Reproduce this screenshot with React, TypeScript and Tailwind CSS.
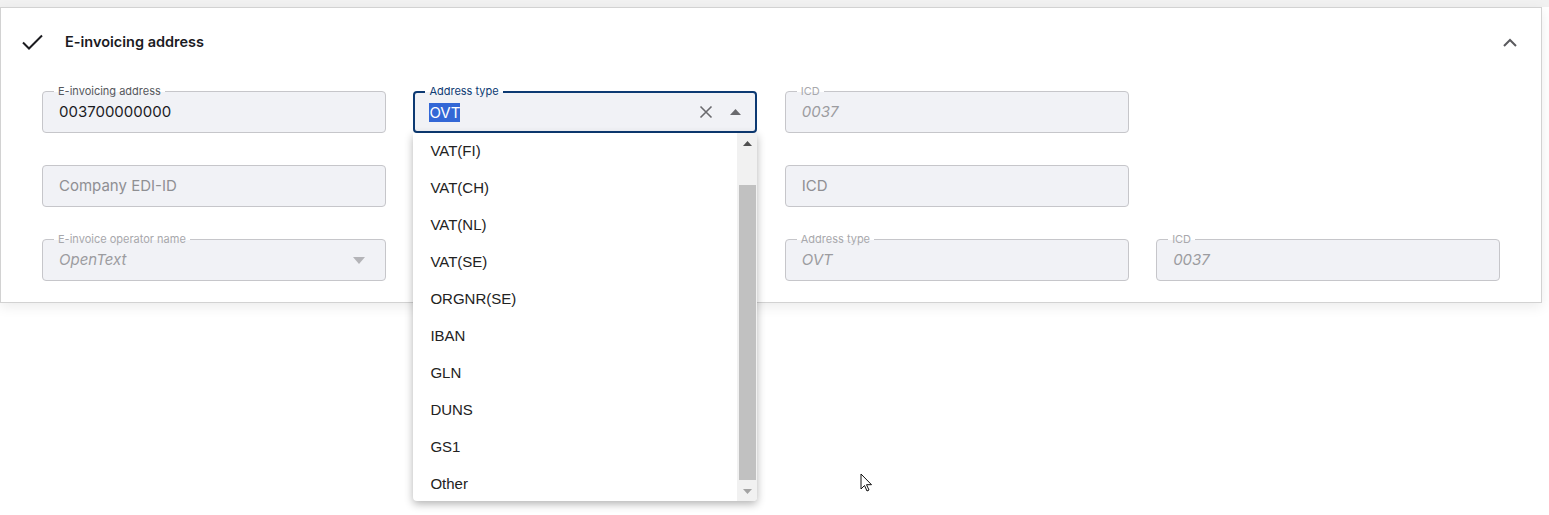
import React from 'react';

const sans = { fontFamily: 'Inter, "Noto Sans", sans-serif' };
const arial = { fontFamily: '"Liberation Sans", Arial, sans-serif' };

type FieldProps = {
  label?: string;
  value?: string;
  placeholder?: string;
  disabled?: boolean;
  arrow?: boolean;
};

function Field({ label, value, placeholder, disabled, arrow }: FieldProps) {
  return (
    <div className="relative h-[42px] rounded-[4px] border border-[#c6c6ca] bg-[#f1f2f6] flex items-center pl-4 pr-5">
      {label && (
        <span
          className={`absolute left-[11px] -top-[8px] px-[4px] text-[11px] leading-[14px] bg-[linear-gradient(to_bottom,#ffffff_55%,#f1f2f6_55%)] ${
            disabled ? 'text-[#a8a8ac]' : 'text-[#55575c]'
          }`}
        >
          {label}
        </span>
      )}
      {value ? (
        <span className={`text-[15px] ${disabled ? 'italic text-[#9c9ca0]' : 'text-[#1b1b1f]'}`}>{value}</span>
      ) : (
        placeholder && <span className="text-[15px] text-[#8f8f93]">{placeholder}</span>
      )}
      {arrow && (
        <svg className="ml-auto" width="12" height="7" viewBox="0 0 12 7">
          <path d="M0 0h12L6 7z" fill="#b4b4b8" />
        </svg>
      )}
    </div>
  );
}

const options = ['VAT(FI)', 'VAT(CH)', 'VAT(NL)', 'VAT(SE)', 'ORGNR(SE)', 'IBAN', 'GLN', 'DUNS', 'GS1', 'Other'];

function AddressTypeSelect() {
  return (
    <div className="relative h-[42px] rounded-[4px] border-2 border-[#0d3a73] bg-[#f1f2f6] flex items-center pl-[14px] pr-[14px]">
      <span className="absolute left-[10px] -top-[9px] px-[4px] text-[11px] leading-[14px] text-[#0d3a73] bg-[linear-gradient(to_bottom,#ffffff_55%,#f1f2f6_55%)]">
        Address type
      </span>
      <span className="text-[15px] leading-[19px] bg-[#3367d6] text-white">OVT</span>
      <svg className="ml-auto mr-[17px]" width="14" height="14" viewBox="0 0 14 14">
        <path d="M1.5 1.5l11 11M12.5 1.5l-11 11" stroke="#6a6a6e" strokeWidth="1.6" />
      </svg>
      <svg width="11" height="6" viewBox="0 0 11 6">
        <path d="M0 6h11L5.5 0z" fill="#6a6a6e" />
      </svg>

      {/* open option list */}
      <div
        className="absolute left-[-2px] top-[40px] w-[344px] h-[368px] bg-white rounded-b-[4px] shadow-[0_3px_8px_rgba(0,0,0,0.3)] flex z-10 overflow-hidden"
        style={arial}
      >
        <ul className="flex-1">
          {options.map((o) => (
            <li key={o} className="h-[37px] flex items-center pl-[17px] text-[15px] text-[#222]">
              {o}
            </li>
          ))}
        </ul>
        <div className="w-[20px] bg-[#f1f1f1] flex flex-col items-center">
          <div className="h-[20px] flex items-center justify-center">
            <svg width="9" height="5" viewBox="0 0 9 5">
              <path d="M0 5h9L4.5 0z" fill="#505050" />
            </svg>
          </div>
          <div className="w-[17px] mt-[32px] h-[295px] bg-[#c1c1c1]" />
          <div className="mt-auto h-[20px] flex items-center justify-center">
            <svg width="9" height="5" viewBox="0 0 9 5">
              <path d="M0 0h9L4.5 5z" fill="#a3a3a3" />
            </svg>
          </div>
        </div>
      </div>
    </div>
  );
}

export default function App() {
  return (
    <div className="relative min-h-screen bg-white" style={sans}>
      <div className="h-[7px] bg-[#f1f1f1]" />
      <section className="w-[1542px] border border-[#d2d2d2] bg-white shadow-[0_4px_12px_rgba(0,0,0,0.08)]">
        <header className="h-[68px] flex items-center pl-[21px] pr-[24px]">
          <svg width="21" height="16" viewBox="0 0 21 16">
            <path d="M1 8.5l6 6L20 1.5" fill="none" stroke="#1b1b1f" strokeWidth="2" />
          </svg>
          <h2 className="ml-[22px] text-[14.5px] font-semibold text-[#1b1b1f]">E-invoicing address</h2>
          <svg className="ml-auto" width="14" height="9" viewBox="0 0 14 9">
            <path d="M1 8l6-6 6 6" fill="none" stroke="#5a5a5e" strokeWidth="2" />
          </svg>
        </header>

        <div className="pl-[41px] pt-[15px] pb-[21px] w-[1499px] grid grid-cols-4 gap-x-[27.5px] gap-y-[32px]">
          <Field label="E-invoicing address" value="003700000000" />
          <AddressTypeSelect />
          <Field label="ICD" value="0037" disabled />
          <div />

          <Field placeholder="Company EDI-ID" />
          <Field />
          <Field placeholder="ICD" />
          <div />

          <Field label="E-invoice operator name" value="OpenText" disabled arrow />
          <Field disabled />
          <Field label="Address type" value="OVT" disabled />
          <Field label="ICD" value="0037" disabled />
        </div>
      </section>

      <svg className="absolute left-[860px] top-[473px]" width="13" height="20" viewBox="0 0 13 20">
        <path d="M1 1v15l3.5-3.5 2.5 5.5 2-1-2.5-5.3H11.5z" fill="#fff" stroke="#111" strokeWidth="1" />
      </svg>
    </div>
  );
}
